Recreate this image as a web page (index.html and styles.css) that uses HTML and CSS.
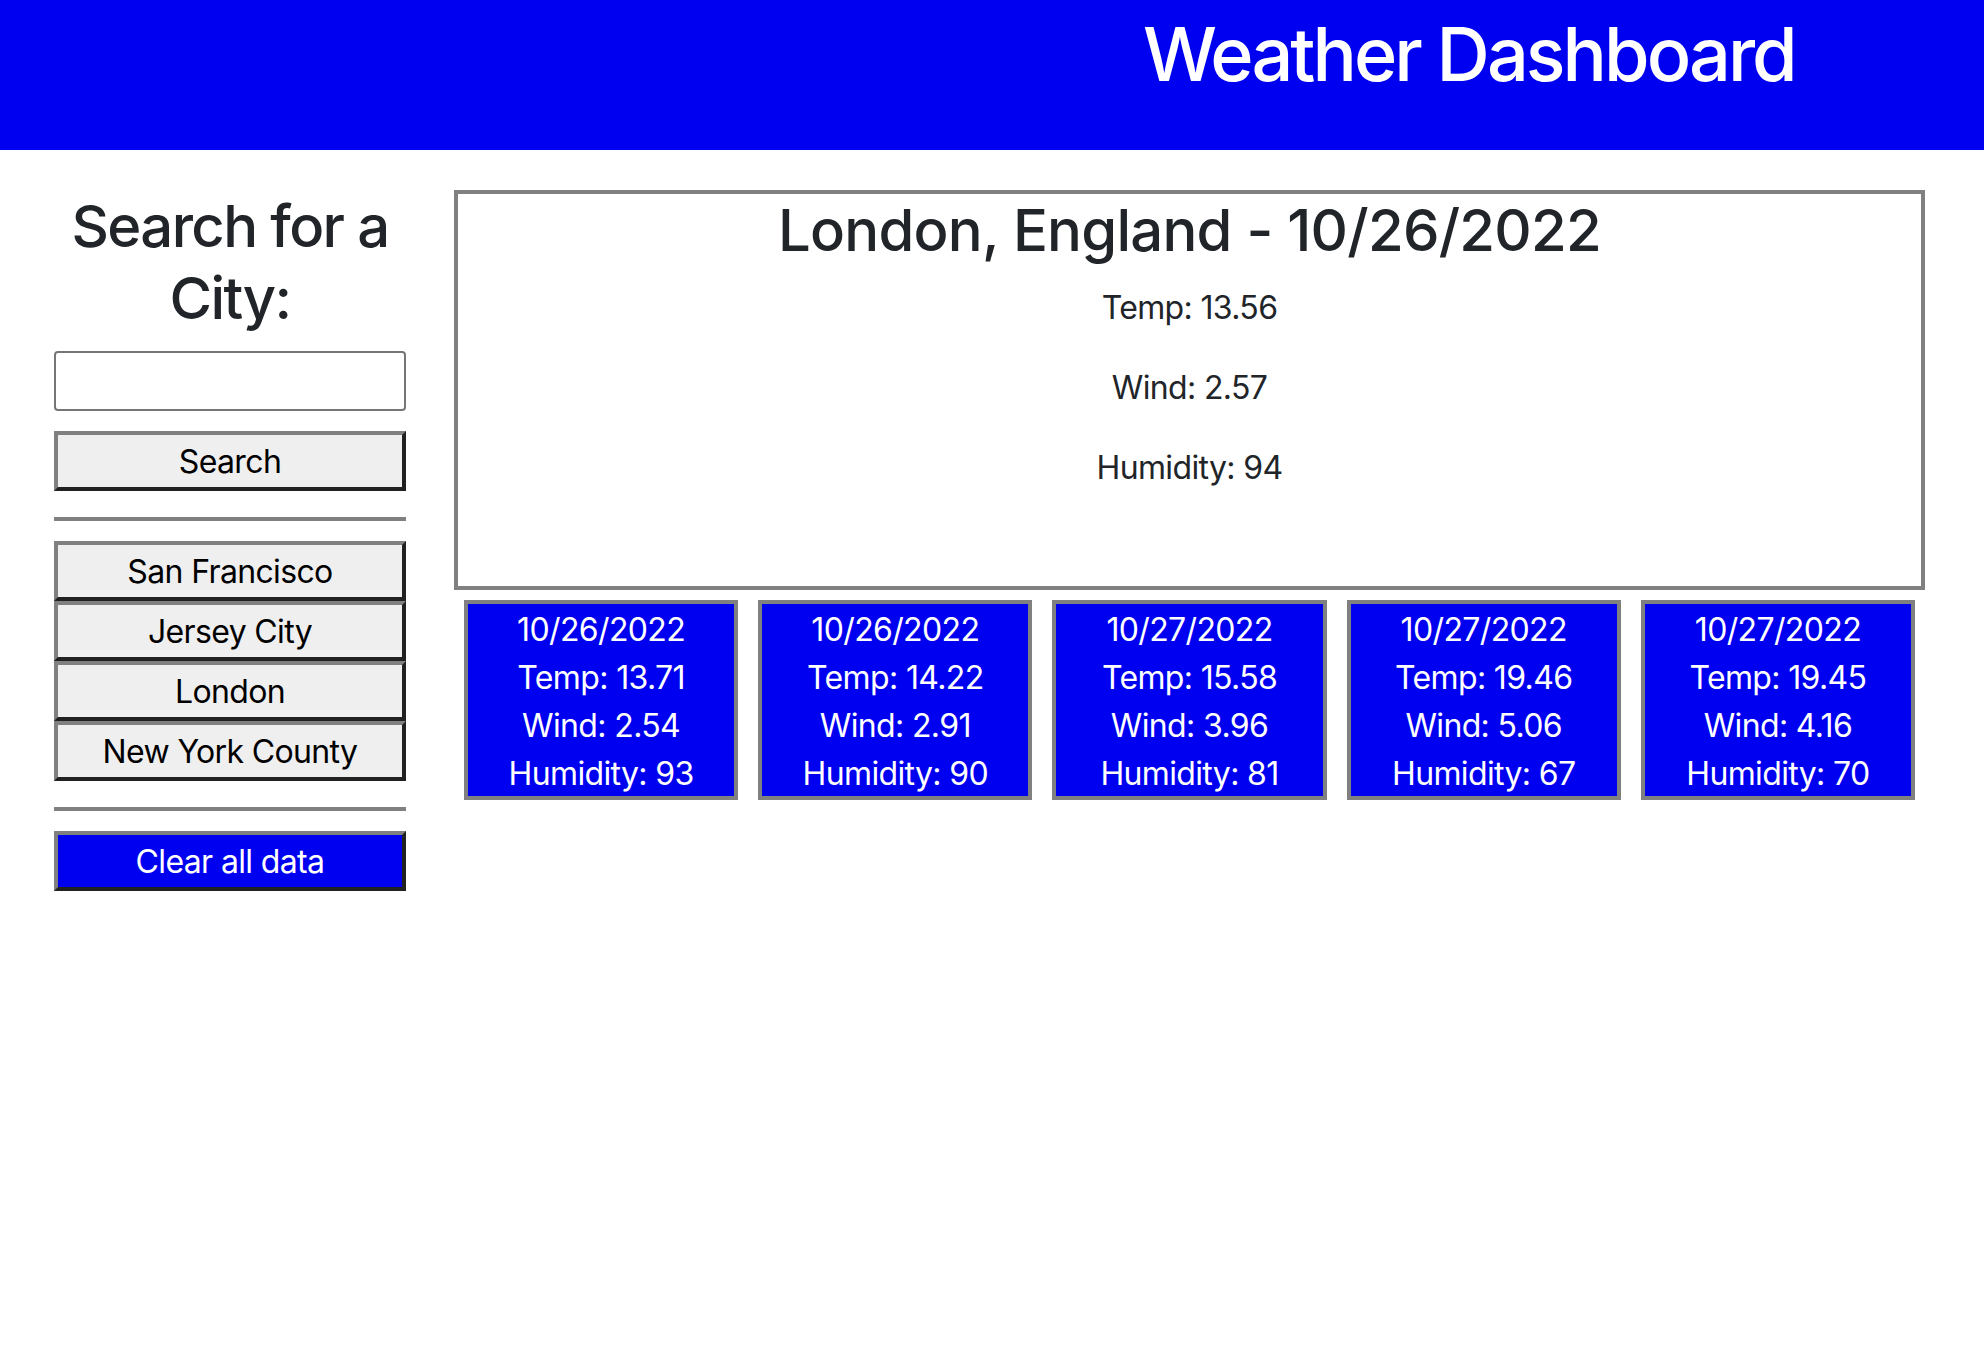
FILE: index.html
```html
<!DOCTYPE html>
<html lang="en">
<head>
<meta charset="utf-8">
<title>Weather Dashboard</title>
<link rel="stylesheet" href="styles.css">
</head>
<body>
<header class="site-header">
  <h1 class="site-title">Weather Dashboard</h1>
</header>
<div class="layout">
  <aside class="sidebar">
    <h2 class="search-heading">Search for a City:</h2>
    <input class="city-input" type="text" aria-label="City">
    <button class="btn btn-search">Search</button>
    <hr class="divider">
    <div class="history">
      <button class="btn">San Francisco</button>
      <button class="btn">Jersey City</button>
      <button class="btn">London</button>
      <button class="btn">New York County</button>
    </div>
    <hr class="divider">
    <button class="btn btn-clear">Clear all data</button>
  </aside>
  <main class="content">
    <section class="current">
      <h2 class="current-title">London, England - 10/26/2022</h2>
      <p class="current-line">Temp: 13.56</p>
      <p class="current-line">Wind: 2.57</p>
      <p class="current-line">Humidity: 94</p>
    </section>
    <div class="forecast">
      <div class="card">
        <div class="card-line">10/26/2022</div>
        <div class="card-line">Temp: 13.71</div>
        <div class="card-line">Wind: 2.54</div>
        <div class="card-line">Humidity: 93</div>
      </div>
      <div class="card">
        <div class="card-line">10/26/2022</div>
        <div class="card-line">Temp: 14.22</div>
        <div class="card-line">Wind: 2.91</div>
        <div class="card-line">Humidity: 90</div>
      </div>
      <div class="card">
        <div class="card-line">10/27/2022</div>
        <div class="card-line">Temp: 15.58</div>
        <div class="card-line">Wind: 3.96</div>
        <div class="card-line">Humidity: 81</div>
      </div>
      <div class="card">
        <div class="card-line">10/27/2022</div>
        <div class="card-line">Temp: 19.46</div>
        <div class="card-line">Wind: 5.06</div>
        <div class="card-line">Humidity: 67</div>
      </div>
      <div class="card">
        <div class="card-line">10/27/2022</div>
        <div class="card-line">Temp: 19.45</div>
        <div class="card-line">Wind: 4.16</div>
        <div class="card-line">Humidity: 70</div>
      </div>
    </div>
  </main>
</div>
</body>
</html>
```

FILE: styles.css
```css
* {
  box-sizing: border-box;
}

html, body {
  margin: 0;
  padding: 0;
  background: #ffffff;
}

body {
  font-family: Inter, "Noto Sans", "Liberation Sans", sans-serif;
  font-size: 32px;
  line-height: 48px;
  letter-spacing: -0.02em;
  color: #212529;
}

.site-header {
  height: 150px;
  background: #0000f0;
  padding: 11px 0 0 1143px;
}

.site-title {
  margin: 0;
  font-size: 73.76px;
  line-height: 1.2;
  font-weight: 500;
  color: #ffffff;
  letter-spacing: -0.04em;
  white-space: nowrap;
}

.layout {
  display: flex;
  align-items: flex-start;
  gap: 48px;
  padding: 40px 59px 0 54px;
}

.sidebar {
  width: 352px;
  flex: none;
  display: flex;
  flex-direction: column;
}

.search-heading {
  margin: 0 0 17px;
  font-size: 58px;
  line-height: 72px;
  font-weight: 500;
  text-align: center;
  letter-spacing: -0.028em;
}

.city-input {
  display: block;
  width: 100%;
  height: 60px;
  margin: 0 0 20px;
  border: 2px solid #767676;
  border-radius: 4px;
  background: #ffffff;
  font: inherit;
}

.btn {
  display: block;
  width: 100%;
  height: 60px;
  margin: 0;
  padding: 3px 12px 1px;
  border-width: 4px;
  border-style: solid;
  border-color: #808080 #212121 #212121 #808080;
  background: #efefef;
  color: #000000;
  font-family: inherit;
  font-size: 32px;
  line-height: 48px;
  letter-spacing: -0.02em;
  text-align: center;
}

.btn-clear {
  background: #0000f0;
  color: #ffffff;
}

.divider {
  height: 4px;
  margin: 26px 0 20px;
  border: 0;
  background: #808080;
}

.history {
  display: flex;
  flex-direction: column;
}

.content {
  flex: 1;
  min-width: 0;
}

.current {
  height: 400px;
  border: 4px solid #808080;
  text-align: center;
}

.current-title {
  margin: 0 0 18px;
  font-size: 58px;
  line-height: 72px;
  font-weight: 500;
  letter-spacing: -0.013em;
}

.current-line {
  margin: 0 0 32px;
}

.forecast {
  display: flex;
  margin-top: 10px;
}

.card {
  flex: 1;
  height: 200px;
  margin: 0 10px;
  padding-top: 2px;
  border: 4px solid #808080;
  background: #0000f0;
  color: #ffffff;
  text-align: center;
}

.card-line {
  line-height: 48px;
}
```
